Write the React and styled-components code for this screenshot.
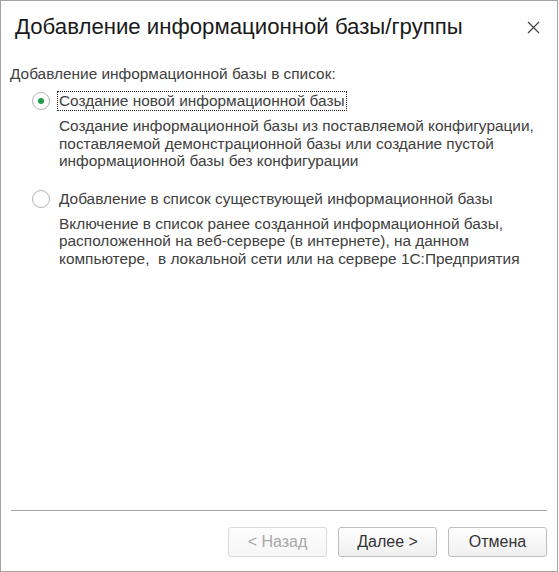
import React from "react";
import styled, { createGlobalStyle } from "styled-components";

const Global = createGlobalStyle`
  html, body { margin: 0; padding: 0; background: #fff; }
  body { font-family: "Liberation Sans", Arial, sans-serif; }
`;

const Window = styled.div`
  box-sizing: border-box;
  width: 558px;
  height: 572px;
  border: 1px solid #a3a3a3;
  background: #fff;
  display: flex;
  flex-direction: column;
`;

const Header = styled.div`
  display: flex;
  align-items: center;
  justify-content: space-between;
  height: 52px;
  padding: 0 17px 0 14px;
`;

const Title = styled.h1`
  margin: 0;
  font-size: 22.2px;
  font-weight: normal;
  color: #1a1a1a;
`;

const Close = styled.button`
  border: 0;
  background: none;
  padding: 0;
  width: 14px;
  height: 14px;
  display: flex;
  align-items: center;
  justify-content: center;
  cursor: pointer;
`;

const Body = styled.div`
  flex: 1;
  padding: 12px 9px 0 9px;
  color: #404040;
  font-size: 15.4px;
`;

const Lead = styled.div`
  line-height: 18px;
  margin-bottom: 8px;
`;

const Option = styled.div`
  display: grid;
  grid-template-columns: 18px 1fr;
  column-gap: 7px;
  row-gap: 6px;
  padding-left: 22px;
  margin-bottom: ${(p) => p.$gap || 0}px;
`;

const Radio = styled.span`
  box-sizing: border-box;
  width: 18px;
  height: 18px;
  border-radius: 50%;
  border: 1px solid #b4b4b4;
  background: #fff;
  display: flex;
  align-items: center;
  justify-content: center;
  align-self: center;
  &::after {
    content: "";
    width: 6px;
    height: 6px;
    border-radius: 50%;
    background: #1e9b4a;
    display: ${(p) => (p.$checked ? "block" : "none")};
  }
`;

const Label = styled.span`
  justify-self: start;
  line-height: 18px;
  padding: 0 1px;
  border: 1px dotted ${(p) => (p.$focused ? "#222" : "transparent")};
`;

const Desc = styled.div`
  grid-column: 2;
  line-height: 17.5px;
  padding-left: 2px;
`;

const Footer = styled.div`
  padding: 0 10px 14px 10px;
`;

const Separator = styled.div`
  height: 1px;
  background: #a8a8a8;
  margin-bottom: 16px;
`;

const Buttons = styled.div`
  display: flex;
  justify-content: flex-end;
  gap: 11px;
`;

const Button = styled.button`
  box-sizing: border-box;
  width: 99px;
  height: 30px;
  border-radius: 3px;
  border: 1px solid ${(p) => (p.disabled ? "#dadada" : "#bdbdbd")};
  background: ${(p) =>
    p.disabled
      ? "linear-gradient(#fdfdfd, #f6f6f6)"
      : "linear-gradient(#ffffff, #efefef)"};
  color: ${(p) => (p.disabled ? "#a8a8a8" : "#333")};
  font-family: "Liberation Sans", Arial, sans-serif;
  font-size: 16px;
  padding: 0;
`;

export default function App() {
  return (
    <>
      <Global />
      <Window>
        <Header>
          <Title>Добавление информационной базы/группы</Title>
          <Close aria-label="Закрыть">
            <svg width="13" height="13" viewBox="0 0 13 13">
              <path d="M1 1L12 12M12 1L1 12" stroke="#444" strokeWidth="1.2" />
            </svg>
          </Close>
        </Header>
        <Body>
          <Lead>Добавление информационной базы в список:</Lead>
          <Option $gap={19}>
            <Radio $checked />
            <Label $focused>Создание новой информационной базы</Label>
            <Desc>
              Создание информационной базы из поставляемой конфигурации,
              <br />
              поставляемой демонстрационной базы или создание пустой
              <br />
              информационной базы без конфигурации
            </Desc>
          </Option>
          <Option>
            <Radio />
            <Label>Добавление в список существующей информационной базы</Label>
            <Desc>
              Включение в список ранее созданной информационной базы,
              <br />
              расположенной на веб-сервере (в интернете), на данном
              <br />
              компьютере,&nbsp; в локальной сети или на сервере 1С:Предприятия
            </Desc>
          </Option>
        </Body>
        <Footer>
          <Separator />
          <Buttons>
            <Button disabled>&lt; Назад</Button>
            <Button>Далее &gt;</Button>
            <Button>Отмена</Button>
          </Buttons>
        </Footer>
      </Window>
    </>
  );
}
